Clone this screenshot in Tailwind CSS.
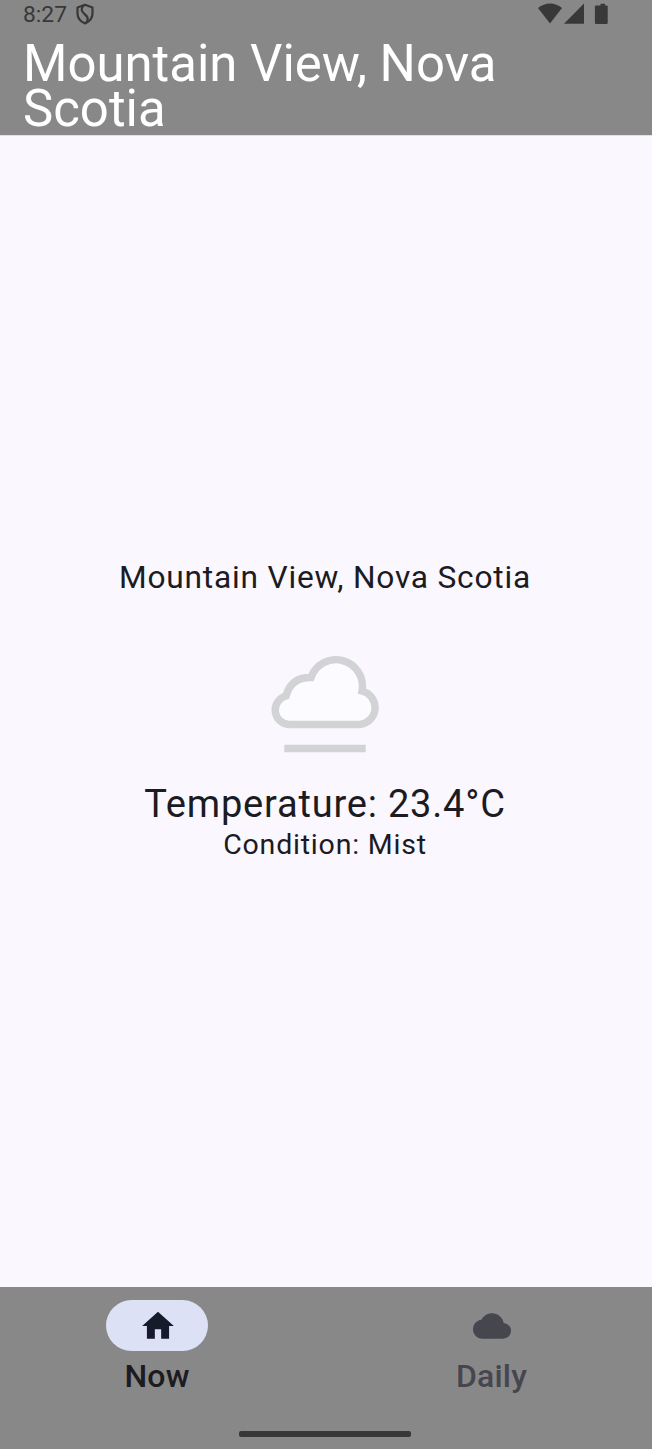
<!DOCTYPE html>
<html lang="en"><head><meta charset="utf-8"><title>Weather</title>
<script src="https://cdn.jsdelivr.net/npm/@tailwindcss/browser@4"></script></head>
<body class="bg-[#faf7ff] font-['Roboto',sans-serif] text-[#1b1b21]">
<div class="flex h-[1449px] w-[652px] flex-col overflow-hidden">
<header class="h-[136px] shrink-0 border-b border-[#e2dfe6] bg-[#888888]">
<div class="flex h-[29px] justify-between pr-[42px] pl-[23px] text-[#383838]">
<div class="flex"><span class="w-[52px] text-[22.8px] leading-[29px]">8:27</span>
<svg class="mt-[3px] h-[22px] w-5" viewBox="0 0 20 22" fill="none" stroke="currentColor" stroke-width="2.2" stroke-linejoin="round"><path d="M10 1.800 17.500 4.500v6c0 4.500-3 8-7.500 10-4.500-2-7.500-5.500-7.500-10v-6z"/><path d="M9.200 2C5.500 5.500 6 8 9.500 11C13.500 14 13.500 17 11 20"/></svg></div>
<svg class="mt-[3px] h-[22px] w-[72px]" viewBox="0 0 72 22" fill="currentColor"><path d="M0 5C7-1 17-1 24 5L12 20.500z"/><path d="M46 .6v20.200H26z"/><path d="M61.200 .8h4.500v1.700h1.700q1 0 1 1v16.200q0 1.300-1.300 1.300h-10.200q-1.300 0-1.300-1.300V3.500q0-1 1-1h4.600z" transform="translate(1.300 0)"/></svg></div>
<h1 class="pt-[12px] pl-[23px] text-[50.900px] leading-[45px] text-white">Mountain View, Nova<br>Scotia</h1>
</header>
<main class="flex grow flex-col items-center pr-[2px]">
<p class="mt-[420px] text-[31.700px] leading-[44px] tracking-[0.790px]">Mountain View, Nova Scotia</p>
<svg class="mt-[40px] h-[130px] w-[150px]" viewBox="0 0 150 130" fill="none" stroke="#d1d3d4" stroke-width="7.400"><path fill="#fcfbff" d="M39 84.500A14.500 14.500 0 0 1 36 56Q41 37 61 37.500A26.450 26.450 0 0 1 112 51A17.020 17.020 0 0 1 109.700 84.500z"/><path d="M34.300 108.500h81.400"/></svg>
<p class="mt-[9px] text-[38.040px] leading-[50px] tracking-[0.790px]">Temperature: 23.4°C</p>
<p class="text-[28.530px] leading-[32px] tracking-[0.790px]">Condition: Mist</p>
</main>
<nav class="flex h-[162px] shrink-0 flex-col bg-[#888888] text-[32px] leading-[40px] font-medium tracking-[0.200px]">
<div class="flex pt-[13px]">
<div class="flex w-[314px] flex-col items-center"><span class="flex h-[51px] w-[102px] items-center justify-center rounded-full bg-[#dde1f6] pl-px text-[#161b2c]"><svg class="size-[38px]" viewBox="0 0 24 24" fill="currentColor"><path d="M10 20v-6h4v6h5v-8h3L12 3 2 12h3v8z"/></svg></span><span class="mt-[5px]">Now</span></div>
<div class="ml-[21px] flex w-[313px] flex-col items-center text-[#46464f]"><span class="flex h-[51px] w-[102px] items-center justify-center"><svg class="size-[38px]" viewBox="0 0 24 24" fill="currentColor"><path d="M19.350 10.040C18.670 6.590 15.640 4 12 4 9.110 4 6.600 5.640 5.350 8.040 2.340 8.360 0 10.910 0 14c0 3.310 2.690 6 6 6h13c2.760 0 5-2.240 5-5 0-2.640-2.050-4.780-4.650-4.960z"/></svg></span><span class="mt-[5px]">Daily</span></div>
</div>
<div class="mt-auto mb-3 ml-[239px] h-[6px] w-[172px] rounded-[2px] bg-[#383838]"></div>
</nav>
</div></body></html>
